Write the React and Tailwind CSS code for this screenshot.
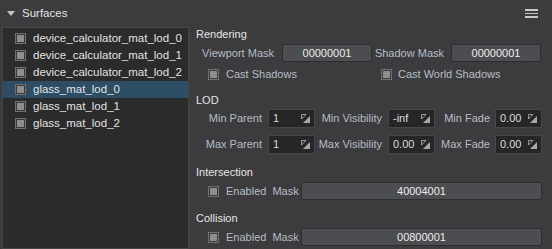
import React, { useState } from 'react';

const surfaces = [
  'device_calculator_mat_lod_0',
  'device_calculator_mat_lod_1',
  'device_calculator_mat_lod_2',
  'glass_mat_lod_0',
  'glass_mat_lod_1',
  'glass_mat_lod_2',
];

const Check = () => (
  <span className="w-[11px] h-[11px] border border-[#707070] bg-[#3a3a3a] flex items-center justify-center shrink-0">
    <span className="w-[7px] h-[7px] bg-[#8e8e8e]" />
  </span>
);

const Spin = () => (
  <svg width="9" height="9" viewBox="0 0 9 9" className="shrink-0">
    <path d="M0.5 0.5 H5 L0.5 5 Z" fill="none" stroke="#9a9a9a" strokeWidth="1" />
    <path d="M9 2 V9 H2 Z" fill="#a8a8a8" />
  </svg>
);

const NumBox = ({ value }) => (
  <div className="w-[47px] h-[19px] bg-[#262626] border border-[#474747] flex items-center justify-between pl-[4px] pr-[4px] text-[#dcdcdc]">
    <span>{value}</span>
    <Spin />
  </div>
);

const MaskBox = ({ value, w }) => (
  <div className={`${w} h-[18px] bg-[#4c4d50] border border-[#2e2e2e] rounded-[2px] flex items-center justify-center text-[#ececec]`}>
    {value}
  </div>
);

const App = () => {
  const [selected, setSelected] = useState(3);

  return (
    <div className="w-[552px] h-[249px] bg-[#3c3c3e] overflow-hidden text-[11px] leading-none font-['Liberation_Sans',Arial,sans-serif] text-[#d8d8d8]">
      <div className="h-[27px] flex items-center justify-between pl-[7px] pr-[14px]">
        <div className="flex items-center">
          <svg width="8" height="5" viewBox="0 0 8 5"><path d="M0 0 H8 L4 5 Z" fill="#c4c4c4" /></svg>
          <span className="ml-[7px] text-[11.5px] text-[#e4e4e4]">Surfaces</span>
        </div>
        <div className="flex flex-col gap-[2px]">
          <span className="w-[13px] h-[1.5px] bg-[#c8c8c8]" />
          <span className="w-[13px] h-[1.5px] bg-[#c8c8c8]" />
          <span className="w-[13px] h-[1.5px] bg-[#c8c8c8]" />
        </div>
      </div>

      <div className="flex">
        <div className="ml-[2px] w-[187px] h-[222px] bg-[#2b2b2b] border border-[#464646] pt-[2px]">
          {surfaces.map((name, i) => (
            <div
              key={name}
              onClick={() => setSelected(i)}
              className={`h-[17px] flex items-center pl-[12px] cursor-pointer ${i === selected ? 'bg-[#2c4d64]' : ''}`}
            >
              <Check />
              <span className="ml-[7px] text-[11.5px] text-[#e2e2e2]">{name}</span>
            </div>
          ))}
        </div>

        <div className="flex-1 pl-[7px] text-[#b6bcc6]">
          <div className="h-[15px] flex items-center text-[#e6e6e6]">Rendering</div>
          <div className="mt-[2px] h-[18px] flex items-center">
            <span className="w-[86px] text-right pr-[8px]">Viewport Mask</span>
            <MaskBox value="00000001" w="w-[90px]" />
            <span className="w-[79px] text-right pr-[7px]">Shadow Mask</span>
            <MaskBox value="00000001" w="w-[90px]" />
          </div>
          <div className="mt-[4px] h-[16px] flex items-center pl-[12px]">
            <Check />
            <span className="ml-[7px] w-[155px]">Cast Shadows</span>
            <Check />
            <span className="ml-[6px]">Cast World Shadows</span>
          </div>
          <div className="mt-[10px] h-[16px] flex items-center text-[#e6e6e6]">LOD</div>
          <div className="mt-[1px] flex items-center">
            <span className="w-[66px] text-right">Min Parent</span>
            <div className="ml-[6px]"><NumBox value="1" /></div>
            <span className="w-[67px] text-right">Min Visibility</span>
            <div className="ml-[6px]"><NumBox value="-inf" /></div>
            <span className="w-[55px] text-right">Min Fade</span>
            <div className="ml-[5px]"><NumBox value="0.00" /></div>
          </div>
          <div className="mt-[7px] flex items-center">
            <span className="w-[66px] text-right">Max Parent</span>
            <div className="ml-[6px]"><NumBox value="1" /></div>
            <span className="w-[67px] text-right">Max Visibility</span>
            <div className="ml-[6px]"><NumBox value="0.00" /></div>
            <span className="w-[55px] text-right">Max Fade</span>
            <div className="ml-[5px]"><NumBox value="0.00" /></div>
          </div>
          <div className="mt-[11px] h-[14px] flex items-center text-[#e6e6e6]">Intersection</div>
          <div className="mt-[3px] h-[18px] flex items-center pl-[12px]">
            <Check />
            <span className="ml-[7px]">Enabled</span>
            <span className="ml-[6px]">Mask</span>
            <div className="ml-auto mr-[10px]"><MaskBox value="40004001" w="w-[241px]" /></div>
          </div>
          <div className="mt-[11px] h-[14px] flex items-center text-[#e6e6e6]">Collision</div>
          <div className="mt-[3px] h-[18px] flex items-center pl-[12px]">
            <Check />
            <span className="ml-[7px]">Enabled</span>
            <span className="ml-[6px]">Mask</span>
            <div className="ml-auto mr-[10px]"><MaskBox value="00800001" w="w-[241px]" /></div>
          </div>
        </div>
      </div>
    </div>
  );
};

export default App;
